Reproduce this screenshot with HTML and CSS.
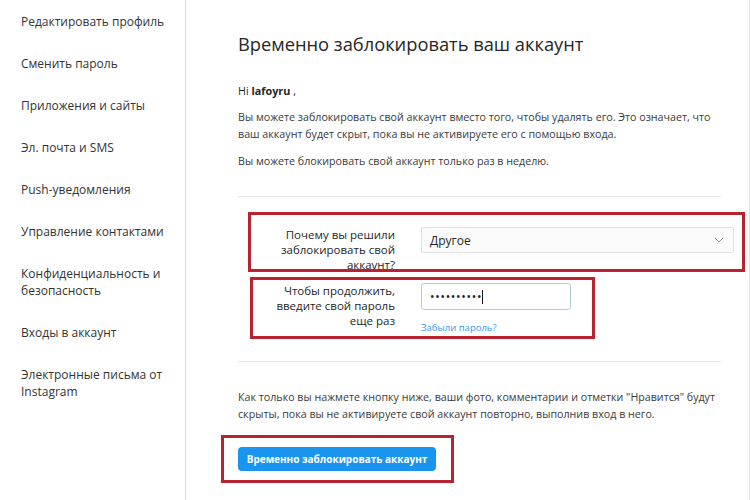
FILE: index.html
```html
<!DOCTYPE html>
<html lang="ru">

<head>
    <meta charset="UTF-8">
    <meta name="viewport" content="width=device-width, initial-scale=1.0">
    <title>Временно заблокировать аккаунт</title>
    <link rel="stylesheet" href="styles.css">
</head>

<body>
    <div class="page">
        <nav class="side">
            <a class="side-item">Редактировать профиль</a>
            <a class="side-item">Сменить пароль</a>
            <a class="side-item">Приложения и сайты</a>
            <a class="side-item">Эл. почта и SMS</a>
            <a class="side-item">Push-уведомления</a>
            <a class="side-item">Управление контактами</a>
            <a class="side-item">Конфиденциальность и безопасность</a>
            <a class="side-item">Входы в аккаунт</a>
            <a class="side-item">Электронные письма от Instagram</a>
        </nav>

        <main class="content">
            <h1 class="title">Временно заблокировать ваш аккаунт</h1>
            <p class="hi">Hi <b>lafoyru</b> ,</p>
            <p class="text">Вы можете заблокировать свой аккаунт вместо того, чтобы удалять его. Это означает, что ваш аккаунт будет скрыт, пока вы не активируете его с помощью входа.</p>
            <p class="text">Вы можете блокировать свой аккаунт только раз в неделю.</p>

            <hr class="line">

            <div class="form-row">
                <label class="form-label">Почему вы решили заблокировать свой аккаунт?</label>
                <div class="form-field">
                    <div class="select">
                        <span>Другое</span>
                        <svg class="chevron" width="10" height="6" viewBox="0 0 10 6">
                            <path d="M1 1 L5 5 L9 1" fill="none" stroke="#9a9a9a" stroke-width="1"/>
                        </svg>
                    </div>
                </div>
                <span class="mark mark-reason"></span>
            </div>

            <div class="form-row row-pass">
                <label class="form-label">Чтобы продолжить, введите свой пароль еще раз</label>
                <div class="form-field">
                    <div class="input">
                        <span class="dots">••••••••••</span><span class="caret"></span>
                    </div>
                    <a class="forgot">Забыли пароль?</a>
                </div>
                <span class="mark mark-pass"></span>
            </div>

            <hr class="line line-2">

            <p class="text warn">Как только вы нажмете кнопку ниже, ваши фото, комментарии и отметки "Нравится" будут скрыты, пока вы не активируете свой аккаунт повторно, выполнив вход в него.</p>

            <div class="btn-wrap">
                <button class="btn">Временно заблокировать аккаунт</button>
                <span class="mark mark-btn"></span>
            </div>
        </main>
    </div>
</body>

</html>
```

FILE: styles.css
```css
body {
    margin: 0;
    background-color: white;
    font-family: "Open Sans", "Noto Sans", sans-serif;
    color: #262626;
}

.page {
    display: flex;
    width: 749px;
    height: 500px;
    border-right: 1px solid #e3e3e3;
}

/* left menu */

.side {
    width: 186px;
    flex-shrink: 0;
    box-sizing: border-box;
    border-right: 1px solid #dbdbdb;
    display: flex;
    flex-direction: column;
}

.side-item {
    display: block;
    padding: 13px 18px 12px 21px;
    font-size: 12px;
    line-height: 17px;
    color: #333;
}

/* main block */

.content {
    flex: 1;
    padding: 32px 0 0 52px;
}

.title {
    margin: 0;
    font-size: 18.3px;
    line-height: 24px;
    font-weight: 400;
    color: #262626;
}

.hi {
    margin: 26px 0 0;
    font-size: 10.8px;
    line-height: 17px;
}

.hi b {
    font-weight: 700;
}

.text {
    margin: 10px 0 0;
    width: 484px;
    font-size: 10.7px;
    line-height: 17px;
    color: #3a3a3a;
}

.line {
    margin: 26px 0 0;
    width: 483px;
    border: none;
    border-top: 1px solid #e6e6e6;
}

.line-2 {
    margin-top: 27px;
}

.warn {
    margin-top: 27px;
}

/* form rows */

.form-row {
    position: relative;
    display: flex;
    gap: 26px;
    margin-top: 30px;
}

.row-pass {
    margin-top: 11px;
}

.form-label {
    width: 157px;
    box-sizing: border-box;
    padding-left: 22px;
    text-align: right;
    font-size: 11.5px;
    line-height: 15px;
    color: #262626;
}

.form-field {
    display: flex;
    flex-direction: column;
}

.select {
    width: 313px;
    height: 26px;
    box-sizing: border-box;
    border: 1px solid #e2e2e2;
    border-radius: 2px;
    background-color: #fbfbfb;
    display: flex;
    align-items: center;
    justify-content: space-between;
    padding: 0 9px 0 8px;
    font-size: 12px;
    color: #262626;
}

.input {
    width: 150px;
    height: 27px;
    box-sizing: border-box;
    border: 1px solid #aecbe0;
    border-radius: 3px;
    display: flex;
    align-items: center;
    padding-left: 8px;
}

.dots {
    font-size: 12px;
    letter-spacing: 0.7px;
    color: #222;
}

.caret {
    width: 1px;
    height: 14px;
    margin-left: 0;
    background-color: #111;
}

.forgot {
    margin-top: 11px;
    font-size: 9.5px;
    line-height: 13px;
    color: #3897f0;
}

/* button */

.btn-wrap {
    position: relative;
    margin-top: 23px;
}

.btn {
    height: 24px;
    width: 198px;
    padding: 0;
    border: none;
    border-radius: 4px;
    background-color: #1a95ef;
    color: white;
    font-family: "Open Sans", "Noto Sans", sans-serif;
    font-size: 10px;
    font-weight: 700;
}

/* red frames drawn over the screenshot */

.mark {
    position: absolute;
    box-sizing: border-box;
    border: 3px solid #b8232f;
}

.mark-reason {
    left: 10px;
    top: -15px;
    width: 497px;
    height: 60px;
}

.mark-pass {
    left: 12px;
    top: -6px;
    width: 345px;
    height: 62px;
}

.mark-btn {
    left: -17px;
    top: -11px;
    width: 233px;
    height: 48px;
}
```
